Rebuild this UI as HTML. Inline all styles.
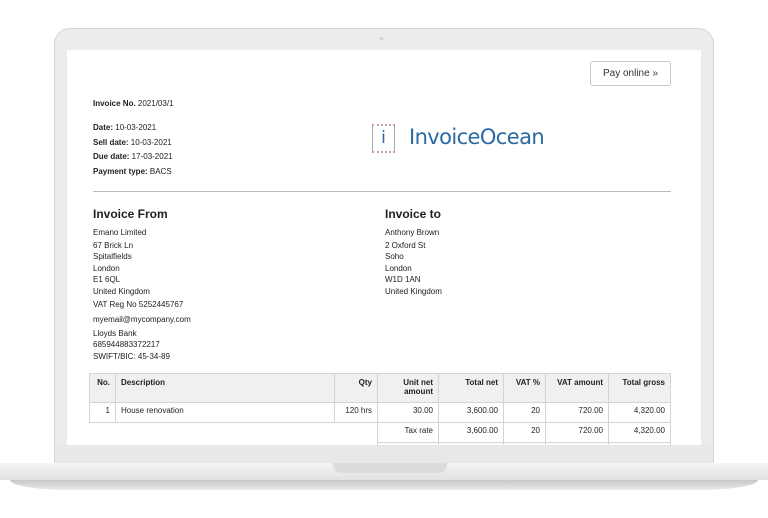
<!DOCTYPE html>
<html><head><meta charset="utf-8"><style>
*{margin:0;padding:0;box-sizing:border-box}
body{width:768px;height:518px;background:#fff;position:relative;overflow:hidden;font-family:"Liberation Sans",Arial,sans-serif;color:#222}
.a{position:absolute}
.bez{left:54px;top:28px;width:660px;height:440px;background:#ececee;border:1px solid #d6d6d8;border-radius:16px 16px 0 0}
.scr{left:67px;top:50px;width:634px;height:395px;background:#fff;overflow:hidden}
.t{font-size:8px;line-height:12px;white-space:nowrap}
b{font-weight:bold}
.h{font-size:12px;font-weight:bold}
table{border-collapse:collapse;font-size:8px}
td{border:1px solid #d4d4d4;padding:3px 5px;text-align:right;vertical-align:top;height:20px}
.hd td{background:#f0f0f0;font-weight:bold;height:29px;padding-top:4px}
</style></head><body>
<div class="a bez"></div>
<div class="a" style="left:380px;top:37px;width:3px;height:3px;border-radius:50%;background:#ccc"></div>
<div class="a scr">
 <div class="a" style="left:523px;top:11px;width:81px;height:25px;border:1px solid #c8c8c8;border-radius:3px;font-size:10px;line-height:23px;text-align:center;color:#333">Pay online »</div>
 <div class="a t" style="left:26px;top:48px"><b>Invoice No.</b> 2021/03/1</div>
 <div class="a t" style="left:26px;top:71px;line-height:14.7px"><b>Date:</b> 10-03-2021<br><b>Sell date:</b> 10-03-2021<br><b>Due date:</b> 17-03-2021<br><b>Payment type:</b> BACS</div>
 <div class="a" style="left:305px;top:74px;width:23px;height:29px;border:1px solid #aaa;border-top:2px dotted #c9a;border-bottom:2px dotted #c9a;font-size:17px;color:#2a6aa3;text-align:center;line-height:24px;font-family:'DejaVu Sans',sans-serif">i</div>
 <div class="a" style="left:342px;top:75px;font-size:21px;color:#2a6aa3;font-family:'DejaVu Sans',sans-serif;letter-spacing:-0.6px">InvoiceOcean</div>
 <div class="a" style="left:26px;top:141px;width:578px;height:1px;background:#bbb"></div>
 <div class="a h" style="left:26px;top:157px">Invoice From</div>
 <div class="a h" style="left:318px;top:157px">Invoice to</div>
 <div class="a t" style="left:26px;top:177px;line-height:11.5px">Emano Limited<div style="height:1px"></div>67 Brick Ln<br>Spitalfields<br>London<br>E1 6QL<br>United Kingdom<div style="height:1.5px"></div>VAT Reg No 5252445767<div style="height:3.5px"></div>myemail@mycompany.com<div style="height:2.5px"></div>Lloyds Bank<br>685944883372217<br>SWIFT/BIC: 45-34-89</div>
 <div class="a t" style="left:318px;top:177px;line-height:11.5px">Anthony Brown<div style="height:1px"></div>2 Oxford St<br>Soho<br>London<br>W1D 1AN<br>United Kingdom</div>
 <table class="a" style="left:22px;top:323px;width:582px">
  <tr class="hd"><td style="width:26px">No.</td><td style="text-align:left;width:219px">Description</td><td style="width:43px">Qty</td><td style="width:61px">Unit net amount</td><td style="width:65px">Total net</td><td style="width:42px">VAT %</td><td style="width:63px">VAT amount</td><td>Total gross</td></tr>
  <tr><td>1</td><td style="text-align:left">House renovation</td><td>120 hrs</td><td>30.00</td><td>3,600.00</td><td>20</td><td>720.00</td><td>4,320.00</td></tr>
  <tr><td colspan="3" style="border:none;border-top:1px solid #d4d4d4"></td><td>Tax rate</td><td>3,600.00</td><td>20</td><td>720.00</td><td>4,320.00</td></tr>
  <tr><td colspan="3" style="border:none"></td><td></td><td></td><td></td><td></td><td></td></tr>
 </table>
</div>
<div class="a" style="left:55px;top:445px;width:658px;height:18px;background:#e8e8ea"></div>
<div class="a" style="left:0;top:463px;width:768px;height:17px;background:linear-gradient(#f4f4f5,#e2e2e4);border-radius:3px 3px 0 0"></div>
<div class="a" style="left:333px;top:463px;width:114px;height:10px;background:#dcdcde;border-radius:0 0 8px 8px"></div>
<div class="a" style="left:10px;top:480px;width:748px;height:10px;background:linear-gradient(#c9c9cc,#e9e9eb);border-radius:0 0 60px 60px / 0 0 10px 10px"></div>
</body></html>
